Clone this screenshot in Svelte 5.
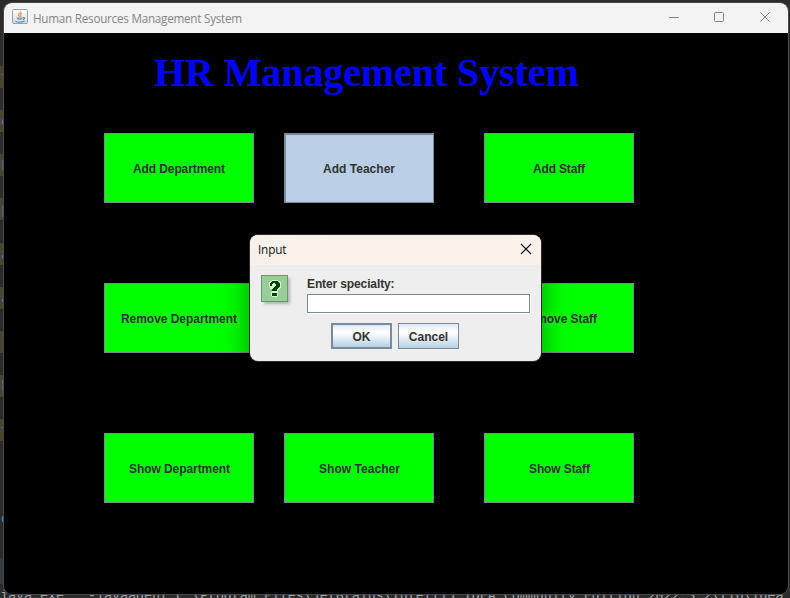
<script>
  const actions = [
    { label: 'Add Department', w: 92 },
    { label: 'Add Teacher', w: 72, pressed: true },
    { label: 'Add Staff', w: 52 },
    { label: 'Remove Department', w: 116 },
    { label: 'Remove Teacher', w: 96 },
    { label: 'Remove Staff', w: 76 },
    { label: 'Show Department', w: 101 },
    { label: 'Show Teacher', w: 81 },
    { label: 'Show Staff', w: 61 }
  ];
  const gutter = ['t', 'e', 'E', 'p', 'a', 'a', 'r', 'h', 't'];
  let specialty = $state('');
</script>

<div class="desktop">
  <div class="gutter">
    {#each gutter as mark}
      <div class="mark"><span>{mark}</span></div>
    {/each}
    <div class="ide-e">e</div>
    <div class="tab"></div>
  </div>
  <div class="console">java.exe" "-javaagent:C:\Program Files\JetBrains\IntelliJ IDEA Community Edition 2022.3.2\lib\idea</div>

  <main class="window">
    <header class="titlebar">
      <svg class="java" width="16" height="16" viewBox="0 0 16 16">
        <defs>
          <linearGradient id="tile" x2="0" y2="1"><stop stop-color="#fff" /><stop offset="1" stop-color="#ccd9e3" /></linearGradient>
        </defs>
        <rect x=".5" y=".5" width="15" height="14" rx="1" fill="url(#tile)" stroke="#8fa3b5" />
        <path d="M8.7 2.3c1 1.6-2.8 2.2-2.3 3.8.2.8 1.2 1.2 1.1 2M10 4.4c-2 .8-2 1.6-1.2 2.3.4.5.2 1-.3 1.4" fill="none" stroke="#eba06a" stroke-width="1.3" />
        <path d="M4.3 8.5h6.4v1.2c-.6 1.4-5 1.4-5.8 0z" fill="#7f9db5" />
        <path d="M3.3 12.2c2.6 1 6.8 1 9.2-.1M11 8.6c2.2-.5 1.8 1.5 0 2" fill="none" stroke="#6f90aa" stroke-width="1.2" />
      </svg>
      <span class="caption">Human Resources Management System</span>
      <svg class="controls" width="104" height="12" viewBox="0 0 104 12" fill="none" stroke="#858585">
        <path d="M1 6.5H11" />
        <rect x="46.5" y="1.5" width="9" height="9" rx="1" />
        <path d="M92.2 1.2l9.6 9.6M101.8 1.2l-9.6 9.6" />
      </svg>
    </header>
    <section class="client">
      <h1>HR Management System</h1>
      <div class="grid">
        {#each actions as a}
          <button class="action" class:pressed={a.pressed}>
            <svg width={a.w} height="16"><text x="0" y="13" textLength={a.w}>{a.label}</text></svg>
          </button>
        {/each}
      </div>
    </section>
  </main>

  <div class="dialog" role="dialog" aria-label="Input">
    <header>
      <span>Input</span>
      <svg width="12" height="12" viewBox="0 0 12 12" stroke="#111" stroke-width="1.1"><path d="M1 1l10 10M11 1L1 11" /></svg>
    </header>
    <div class="body">
      <svg class="question" width="32" height="32" viewBox="0 0 32 32" shape-rendering="crispEdges">
        <g class="shade"><rect x="3" y="3" width="26" height="26" /></g>
        <rect x=".5" y=".5" width="26" height="26" fill="#99cc99" stroke="#669966" />
        <path d="M8 7h1V6h2V5h6v1h2v1h1v6h-1v1h-1v1h-1v6h-1v1h-5v-1h-1v-4h1v-3h-2v-2H8z" fill="#ccffcc" />
        <path d="M9 8h1V7h1V6h6v1h1v1h1v4h-1v1h-1v1h-1v2h-5v-2h1v-1h1v-1h1v-1h1V9h-1V8h-2v1h-1v2H9zM11 18h5v3h-5z" fill="#004400" />
      </svg>
      <form onsubmit={(e) => e.preventDefault()}>
        <label for="specialty">Enter specialty:</label>
        <input id="specialty" bind:value={specialty} />
        <div class="choices">
          <button class="ok">OK</button><button type="button">Cancel</button>
        </div>
      </form>
    </div>
  </div>
</div>

<style>
  .desktop { position: relative; width: 790px; height: 598px; overflow: hidden; background: #2b2b2b; box-sizing: border-box; padding: 3px 2px 0 4px; font-family: "Liberation Sans", Arial, sans-serif; }
  .gutter { position: absolute; left: 0; top: 66px; width: 4px; height: 532px; overflow: hidden; }
  .mark { height: 22px; margin-bottom: 22.15px; background: #49452f; color: #8066a0; font: 14px/23px "DejaVu Sans Mono", monospace; }
  .mark span, .ide-e { display: block; padding-left: 1px; }
  .ide-e { margin-top: 67px; height: 20px; color: #4b8eb5; font: 14px/20px "DejaVu Sans Mono", monospace; }
  .tab { margin-top: 30px; height: 26px; background: #35393b; }
  .console { position: absolute; left: 0; top: 587px; width: 790px; color: #a0a4a8; white-space: pre; font: 13.3px/18px "DejaVu Sans Mono", monospace; letter-spacing: -.01px; }
  .window { position: relative; width: 784px; height: 591px; border-radius: 8px; overflow: hidden; background: #000; box-shadow: 0 0 0 1px #484848; }
  .titlebar { display: flex; align-items: center; height: 30px; background: #f3f3f3; padding: 0 16px 0 8px; box-sizing: border-box; }
  .java { position: relative; top: -1px; }
  .caption { margin-left: 5px; font: 11.7px "Open Sans", "Noto Sans", sans-serif; color: #858585; letter-spacing: -.25px; white-space: nowrap; }
  .controls { margin-left: auto; position: relative; top: -1px; }
  .client { padding: 16px 0 0 100px; }
  h1 { margin: 0 0 0 50px; height: 84px; font: bold 40px/48px "Liberation Serif", "Times New Roman", serif; letter-spacing: -.1px; color: #00f; white-space: nowrap; }
  .grid { display: grid; grid-template-columns: 180px 200px 150px; grid-auto-rows: 150px; }
  button { font-family: inherit; color: #333; margin: 0; padding: 0; box-sizing: border-box; border: 1px solid #7a8a99; border-radius: 0; }
  .action { width: 150px; height: 70px; background: #0f0; display: flex; align-items: center; justify-content: center; }
  .action text { font: bold 12px "Liberation Sans", Arial, sans-serif; fill: #333; }
  .pressed { background: #b8cfe5; box-shadow: inset 1px 1px #7a8a99; }
  .dialog { position: absolute; left: 250px; top: 235px; width: 291px; height: 126px; border-radius: 8px; background: #eee; box-shadow: 0 0 0 1px #292929, 0 8px 26px 2px rgba(0, 0, 0, .38); overflow: hidden; }
  .dialog header { height: 30px; display: flex; align-items: center; justify-content: space-between; box-sizing: border-box; padding: 0 9px 2px 8px; background: linear-gradient(90deg, #f9f0eb, #faf1e8 60%, #f9f0eb); font: 11.8px "Open Sans", "Noto Sans", sans-serif; letter-spacing: -.2px; color: #111; }
  .body { display: flex; padding: 10px 11px 0; }
  .question { flex: none; width: 32px; }
  .shade { fill: #999; filter: blur(1.7px); opacity: .7; }
  form { margin-left: 14px; width: 223px; }
  label { display: block; height: 19px; font: bold 12px/18px "Liberation Sans", Arial, sans-serif; letter-spacing: -.12px; color: #333; }
  input { display: block; box-sizing: border-box; width: 223px; height: 19px; border: 1px solid #7a8a99; padding: 0; margin: 0; background: #fff; border-radius: 0; box-shadow: 1px 1px #fff; outline: none; }
  .choices { display: flex; gap: 6px; padding: 10px 0 0 24px; }
  .choices button { width: 61px; height: 26px; padding-top: 1px; font-size: 12px; font-weight: bold; background: linear-gradient(#dde8f3, #fff 30%, #fff 36%, #b8cfe5); }
  .choices .ok { border-width: 2px; }
</style>
